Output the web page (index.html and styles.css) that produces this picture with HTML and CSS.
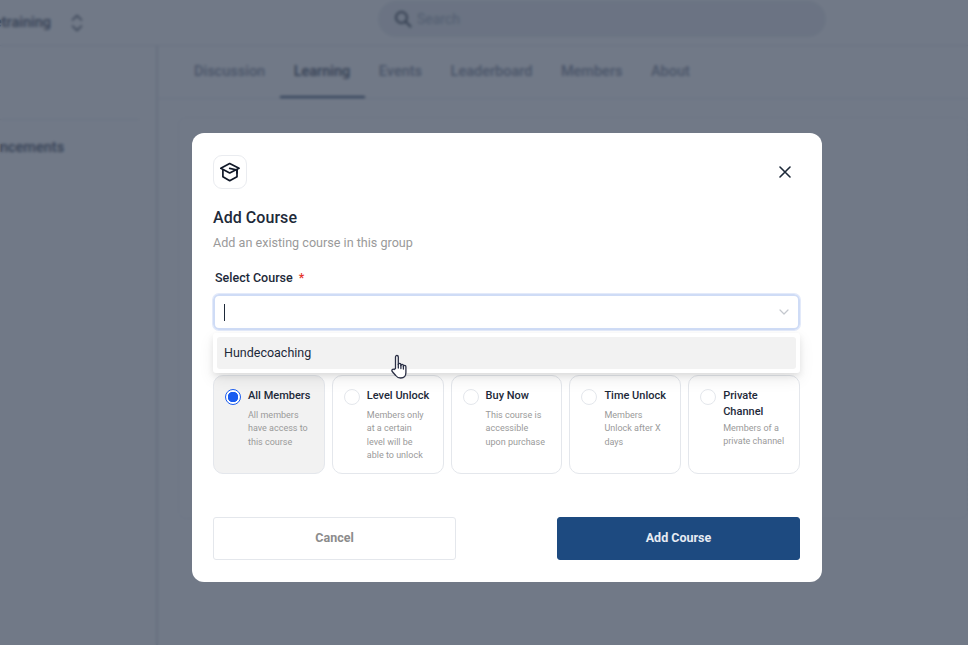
FILE: index.html
```html
<!DOCTYPE html>
<html lang="en">
<head>
<meta charset="UTF-8">
<title>Add Course</title>
<link rel="stylesheet" href="styles.css">
</head>
<body>
<div class="page">
    <div class="topbar">
        <div class="group-name">
            <span>Dogetraining</span>
            <svg class="updown" width="14" height="18" viewBox="0 0 14 18" fill="none" stroke="#3d4656" stroke-width="1.6" stroke-linecap="round" stroke-linejoin="round"><path d="M2.5 6 7 1.5 11.500 6M2.500 12 7 16.500 11.500 12"/></svg>
        </div>
        <div class="search">
            <svg width="18" height="18" viewBox="0 0 18 18" fill="none" stroke="#2f3947" stroke-width="2" stroke-linecap="round"><circle cx="7.500" cy="7.500" r="5.500"/><path d="m12 12 4.500 4.500"/></svg>
            <span>Search</span>
        </div>
    </div>
    <div class="content">
        <div class="sidebar">
            <div class="side-rule"></div>
            <div class="side-item">Announcements</div>
        </div>
        <div class="main">
            <div class="tabs">
                <div class="tab">Discussion</div>
                <div class="tab active">Learning</div>
                <div class="tab">Events</div>
                <div class="tab">Leaderboard</div>
                <div class="tab">Members</div>
                <div class="tab">About</div>
            </div>
            <div class="panel"></div>
        </div>
    </div>
</div>

<div class="overlay">
    <div class="modal">
        <div class="modal-top">
            <div class="icon-box">
                <svg width="20" height="20" viewBox="0 0 20 20" fill="none" stroke="#101828" stroke-width="1.700" stroke-linejoin="round" stroke-linecap="round"><path d="M9.700 1.500 19 6.300 9.700 11 .8 6.300Z"/><path d="M2.900 8v6.700l6.800 4 7.300-4V8"/><path d="M9.700 6.300 17 8v3"/></svg>
            </div>
            <svg class="close" width="12" height="12" viewBox="0 0 12 12" fill="none" stroke="#1d2939" stroke-width="1.600" stroke-linecap="round"><path d="M1 1l10 10M11 1 1 11"/></svg>
        </div>
        <h2 class="title">Add Course</h2>
        <p class="subtitle">Add an existing course in this group</p>

        <div class="field-label">Select Course <span class="req">*</span></div>
        <div class="select-wrap">
            <div class="select">
                <span class="caret"></span>
                <svg width="10" height="6" viewBox="0 0 10 6" fill="none" stroke="#c4c8ce" stroke-width="1.200" stroke-linecap="round" stroke-linejoin="round"><path d="M1 1l4 4 4-4"/></svg>
            </div>
            <div class="dropdown">
                <div class="option">Hundecoaching</div>
            </div>
            <svg class="hand" width="18" height="26" viewBox="0 0 18 25" fill="#fff" stroke="#2a2f45" stroke-width="1.300" stroke-linejoin="round" stroke-linecap="round"><path d="M4.500 14V2.500c0-2 2.800-2 2.800 0V10c0-1.500 2.600-1.500 2.600 0v1c0-1.500 2.500-1.500 2.500 0v1c0-1.400 2.500-1.400 2.500 0.200v5.800c0 3.500-2.200 5.500-5.200 5.500-2.500 0-3.800-.8-5-2.500L1.200 17c-1-1.500.8-3 2-2Z"/><path d="M7.300 10v3.500M9.900 11v3M12.400 12v2.500"/></svg>
        </div>

        <div class="access-grid">
            <div class="access-card selected">
                <span class="radio on"></span>
                <div>
                    <div class="access-name">All Members</div>
                    <div class="access-desc">All members have access to this course</div>
                </div>
            </div>
            <div class="access-card">
                <span class="radio"></span>
                <div>
                    <div class="access-name">Level Unlock</div>
                    <div class="access-desc">Members only at a certain level will be able to unlock</div>
                </div>
            </div>
            <div class="access-card">
                <span class="radio"></span>
                <div>
                    <div class="access-name">Buy Now</div>
                    <div class="access-desc">This course is accessible upon purchase</div>
                </div>
            </div>
            <div class="access-card">
                <span class="radio"></span>
                <div>
                    <div class="access-name">Time Unlock</div>
                    <div class="access-desc">Members Unlock after X days</div>
                </div>
            </div>
            <div class="access-card">
                <span class="radio"></span>
                <div>
                    <div class="access-name">Private Channel</div>
                    <div class="access-desc">Members of a private channel</div>
                </div>
            </div>
        </div>

        <div class="actions">
            <button class="btn cancel">Cancel</button>
            <button class="btn primary">Add Course</button>
        </div>
    </div>
</div>
</body>
</html>
```

FILE: styles.css
```css
html, body {
    height: 100%;
    margin: 0;
    overflow: hidden;
    font-family: Roboto, "Liberation Sans", sans-serif;
    background-color: #fff;
    color: #1d2939;
}
.page {
    height: 645px;
    display: flex;
    flex-direction: column;
}
.topbar {
    height: 45px;
    flex: none;
    display: flex;
    align-items: center;
    border-bottom: 1px solid #dfe2e8;
}
.group-name {
    width: 378px;
    flex: none;
    display: flex;
    align-items: center;
    gap: 19px;
    margin-left: -32px;
    margin-right: 32px;
    font-size: 14.5px;
    font-weight: 500;
    color: #344054;
    box-sizing: border-box;
}
.search {
    width: 448px;
    height: 36px;
    margin-top: -7px;
    border-radius: 18px;
    background: #e9ecf0;
    display: flex;
    align-items: center;
    gap: 5px;
    padding-left: 16px;
    box-sizing: border-box;
    font-size: 14px;
    color: #98a2b3;
}
.content {
    flex: 1;
    display: flex;
}
.sidebar {
    width: 156px;
    flex: none;
    border-right: 2px solid #d9dde3;
    padding-top: 73px;
    overflow: hidden;
}
.side-rule {
    width: 140px;
    border-top: 1px solid #e6e8ec;
}
.side-item {
    margin: 19px 0 0 -42px;
    font-size: 14.5px;
    font-weight: 500;
    color: #344054;
    white-space: nowrap;
}
.main {
    flex: 1;
}
.tabs {
    height: 52px;
    display: flex;
    gap: 28.500px;
    padding-left: 36px;
    border-bottom: 1px solid #e6e8ec;
    font-size: 14.5px;
    font-weight: 500;
    color: #7d8698;
}
.tab {
    padding-top: 17px;
    position: relative;
}
.tab.active {
    color: #344054;
}
.tab.active::after {
    content: "";
    position: absolute;
    left: -14px;
    right: -15px;
    bottom: 0;
    height: 2px;
    background: #1d3a5f;
}
.panel {
    margin: 18px 0 0 20px;
    height: 400px;
    border: 1px dashed #e6e8ec;
    border-radius: 8px;
}

.overlay {
    position: absolute;
    inset: 0;
    background: rgba(52, 64, 84, 0.7);
    backdrop-filter: blur(1.5px);
}
.modal {
    position: absolute;
    left: 192px;
    top: 133px;
    width: 630px;
    height: 449px;
    box-sizing: border-box;
    padding: 22px 22px 22px 21px;
    background: #fff;
    border-radius: 12px;
    display: flex;
    flex-direction: column;
}
.modal-top {
    display: flex;
    justify-content: space-between;
    align-items: center;
}
.icon-box {
    width: 34px;
    height: 34px;
    box-sizing: border-box;
    border: 1px solid #eaecf0;
    border-radius: 9px;
    display: flex;
    align-items: center;
    justify-content: center;
}
.close {
    margin-right: 9px;
}
.title {
    margin: 19px 0 0;
    font-size: 16px;
    line-height: 20px;
    font-weight: 500;
    letter-spacing: 0.05px;
    color: #1d2939;
}
.subtitle {
    margin: 6px 0 0;
    font-size: 12.6px;
    line-height: 18px;
    color: #9a9a9a;
}
.field-label {
    margin: 17px 0 0 2px;
    font-size: 12.5px;
    line-height: 18px;
    font-weight: 500;
    color: #1d2939;
}
.req {
    color: #e5342b;
    margin-left: 3px;
}
.select-wrap {
    position: relative;
    margin-top: 7px;
}
.select {
    height: 36px;
    box-sizing: border-box;
    border: 2px solid #cfdcf6;
    border-radius: 6px;
    box-shadow: 0 0 0 1px #e3eafa;
    display: flex;
    align-items: center;
    justify-content: space-between;
    padding: 0 9px 0 9px;
}
.caret {
    width: 1px;
    height: 17px;
    background: #1d2939;
}
.dropdown {
    position: absolute;
    left: 0;
    right: 0;
    top: 39px;
    padding: 4px;
    background: #fff;
    border-radius: 3px;
    box-shadow: 0 6px 16px rgba(0, 0, 0, 0.08), 0 3px 6px rgba(0, 0, 0, 0.08);
    z-index: 2;
}
.option {
    height: 32px;
    line-height: 31px;
    padding-left: 7px;
    background: #f2f2f2;
    border-radius: 3px;
    font-size: 12.5px;
    color: #1d2939;
}
.hand {
    position: absolute;
    left: 178px;
    top: 60px;
    z-index: 3;
}
.access-grid {
    display: grid;
    grid-template-columns: repeat(5, 1fr);
    gap: 7px;
    margin-top: 45px;
}
.access-card {
    height: 99px;
    box-sizing: border-box;
    border: 1px solid #e4e7ec;
    border-radius: 10px;
    padding: 12px 13px 0 11px;
    display: flex;
    gap: 7px;
}
.access-card.selected {
    background: #f2f2f2;
}
.radio {
    width: 16px;
    height: 16px;
    flex: none;
    margin-top: 1px;
    box-sizing: border-box;
    border: 1px solid #e4e7ec;
    border-radius: 50%;
    background: #fff;
}
.radio.on {
    border-color: #1a5cf0;
    background: radial-gradient(circle, #1a5cf0 0 5px, #fff 5.500px);
}
.access-name {
    min-height: 19px;
    font-size: 11px;
    line-height: 16px;
    font-weight: 500;
    color: #1d2939;
}
.access-desc {
    margin-top: 2px;
    font-size: 9px;
    line-height: 13.300px;
    color: #9a9a9a;
}
.actions {
    margin-top: auto;
    display: flex;
    justify-content: space-between;
}
.btn {
    width: 243px;
    height: 43px;
    padding-bottom: 3px;
    border-radius: 3px;
    font-family: inherit;
    font-size: 12.5px;
    font-weight: 700;
    cursor: pointer;
}
.cancel {
    background: #fff;
    border: 1px solid #e4e7ec;
    color: #8c8c8c;
}
.primary {
    background: #1d4a80;
    border: 1px solid #1d4a80;
    color: #e6ebf3;
}
```
